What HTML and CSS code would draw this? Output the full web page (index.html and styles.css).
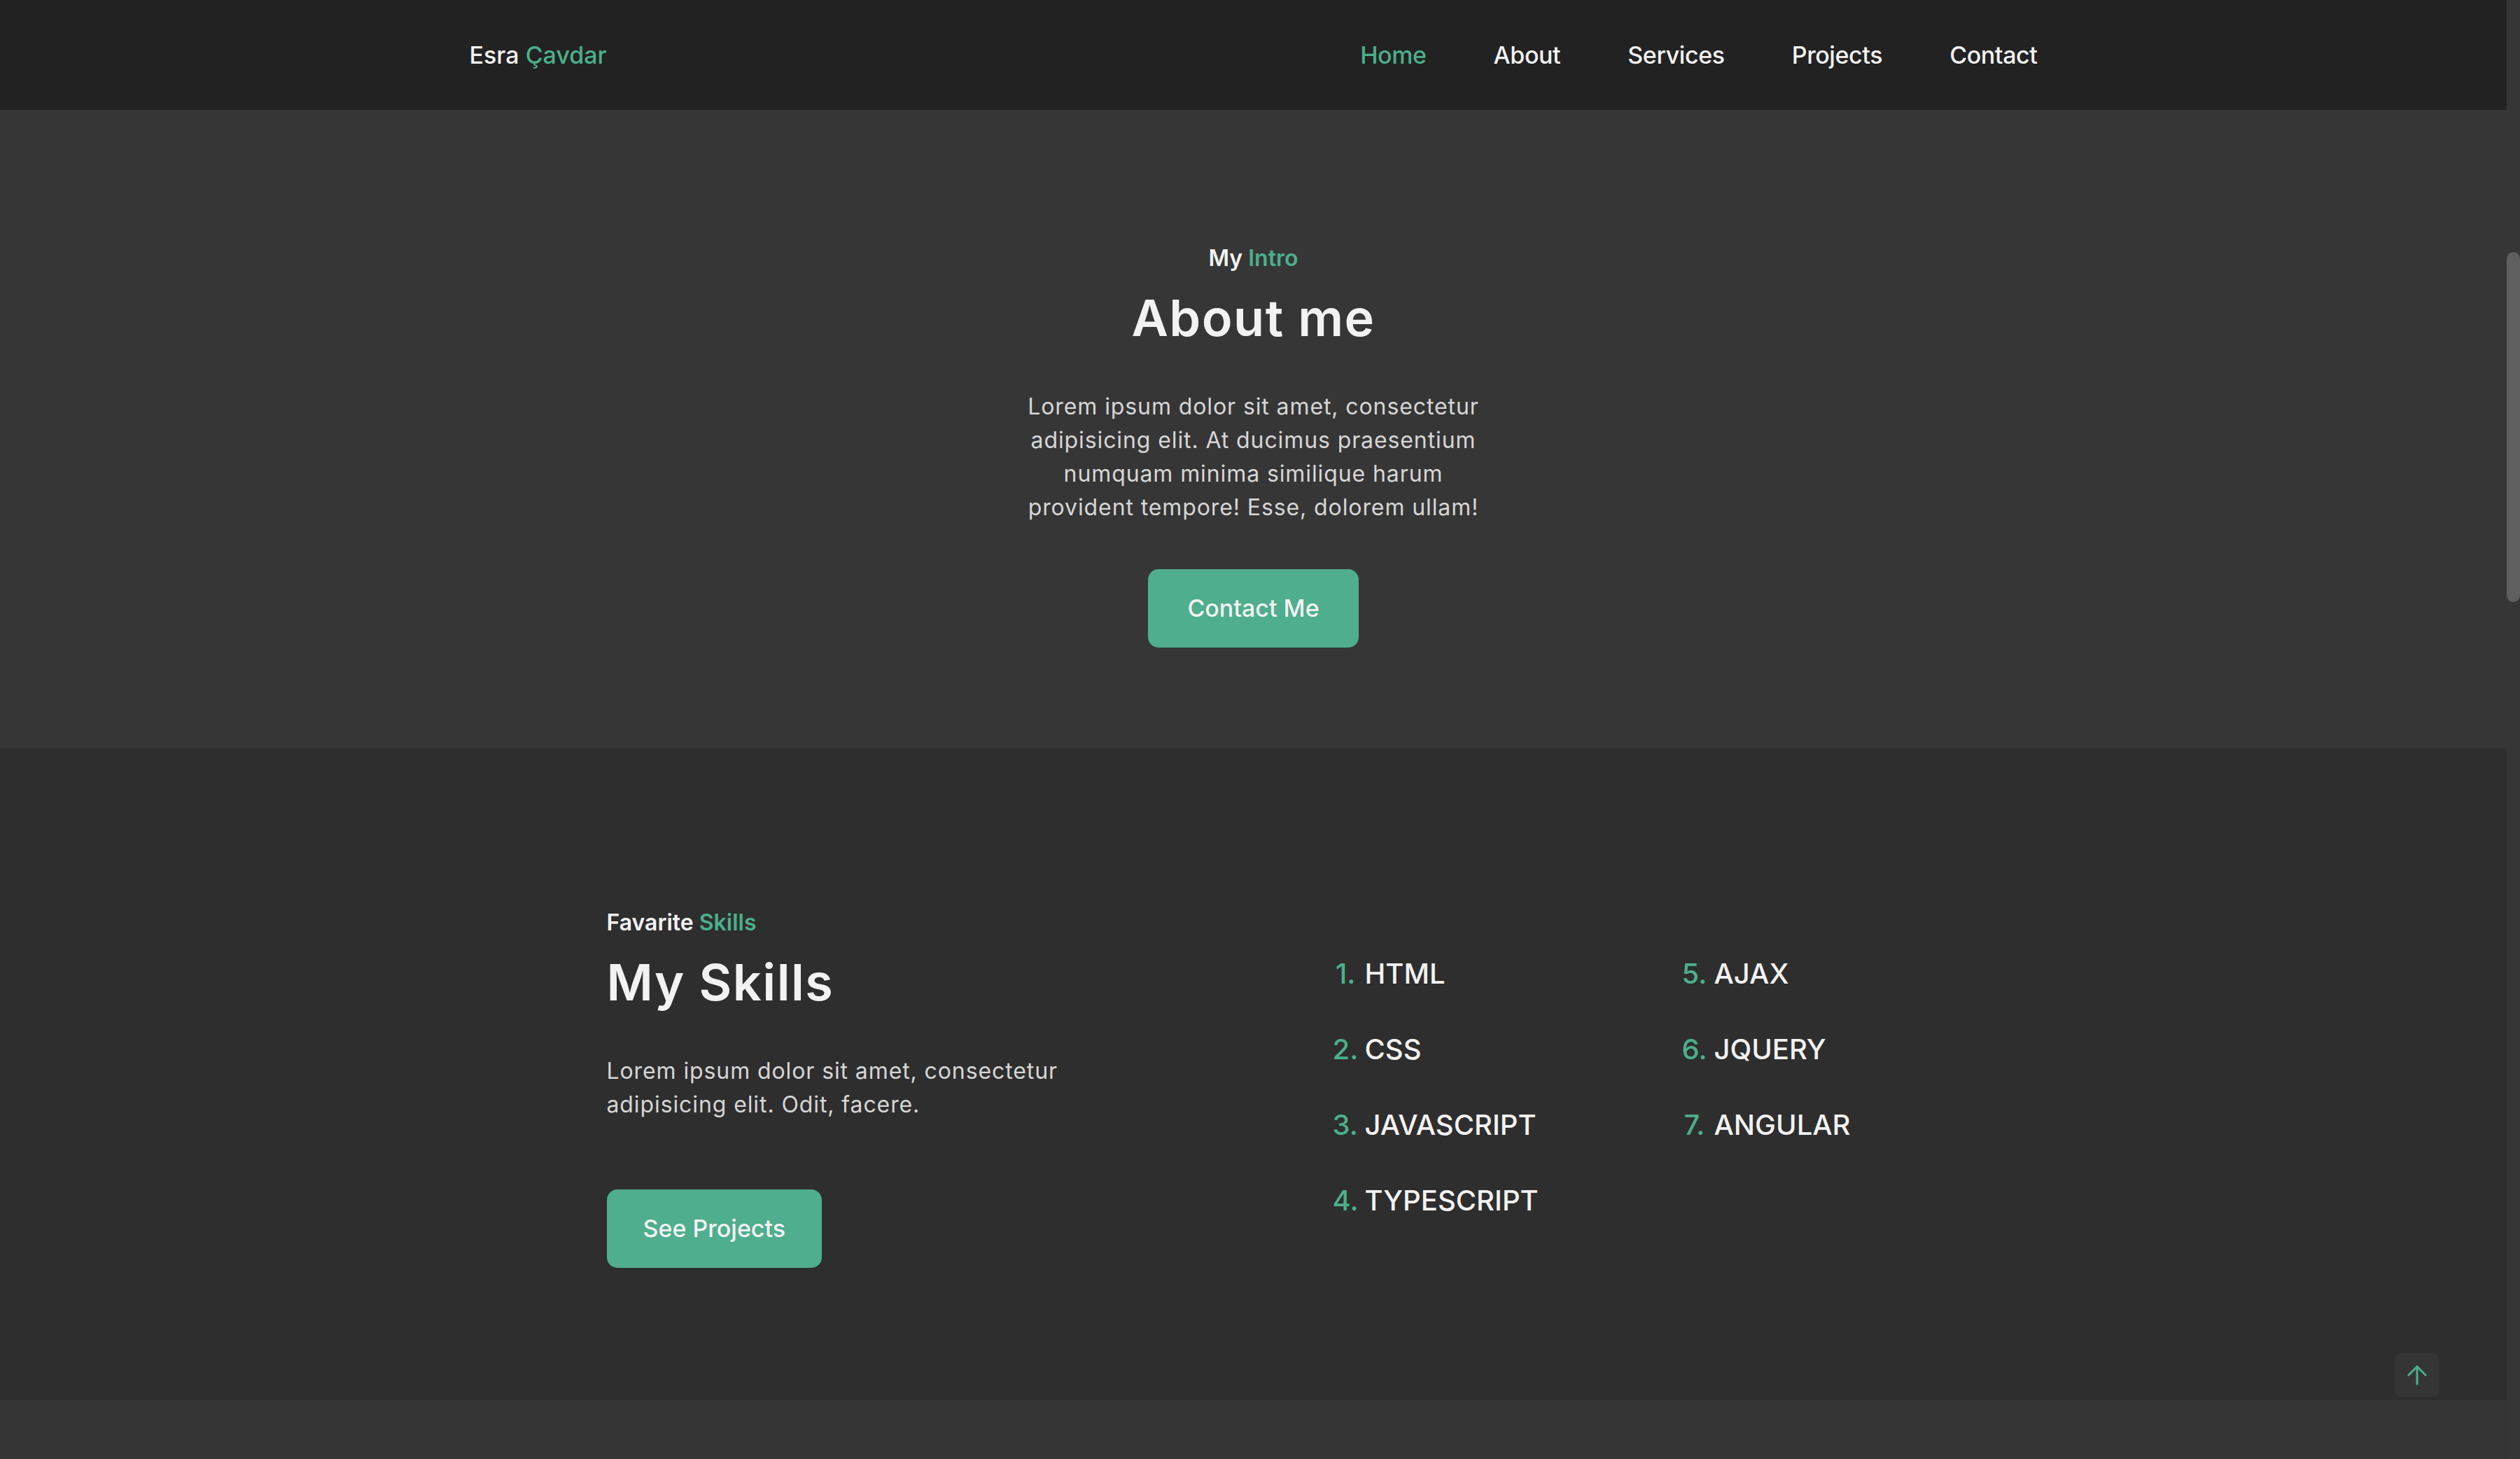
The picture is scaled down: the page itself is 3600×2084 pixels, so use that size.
FILE: index.html
```html
<!DOCTYPE html>
<html lang="en">
<head>
<meta charset="utf-8">
<title>Esra Çavdar</title>
<link rel="stylesheet" href="styles.css">
</head>
<body>
<div class="page">
  <header class="site-header">
    <div class="header-inner">
      <a class="logo" href="#">Esra <span class="accent">Çavdar</span></a>
      <nav>
        <ul class="nav">
          <li><a class="active" href="#">Home</a></li>
          <li><a href="#">About</a></li>
          <li><a href="#">Services</a></li>
          <li><a href="#">Projects</a></li>
          <li><a href="#">Contact</a></li>
        </ul>
      </nav>
    </div>
  </header>

  <section class="about">
    <p class="eyebrow">My <span class="accent">Intro</span></p>
    <h2 class="title">About me</h2>
    <p class="text">Lorem ipsum dolor sit amet, consectetur adipisicing elit. At ducimus praesentium numquam minima similique harum provident tempore! Esse, dolorem ullam!</p>
    <a class="btn" href="#">Contact Me</a>
  </section>

  <section class="skills">
    <div class="skills-inner">
      <div class="skills-intro">
        <p class="eyebrow">Favarite <span class="accent">Skills</span></p>
        <h2 class="title">My Skills</h2>
        <p class="text">Lorem ipsum dolor sit amet, consectetur adipisicing elit. Odit, facere.</p>
        <a class="btn btn-projects" href="#">See Projects</a>
      </div>
      <div class="skills-list-wrap">
        <ol class="skills-list">
          <li>HTML</li>
          <li>CSS</li>
          <li>JAVASCRIPT</li>
          <li>TYPESCRIPT</li>
          <li>AJAX</li>
          <li>JQUERY</li>
          <li>ANGULAR</li>
        </ol>
      </div>
    </div>
  </section>

  <section class="next"></section>
</div>

<a class="to-top" href="#" aria-label="Back to top">
  <svg width="28" height="28" viewBox="0 0 28 28" fill="none" stroke="#4caf8c" stroke-width="3" stroke-linecap="square">
    <line x1="14" y1="3" x2="14" y2="27"/>
    <polyline points="2,14 14,2 26,14"/>
  </svg>
</a>

<div class="scrollbar"><div class="scrollbar-thumb"></div></div>
</body>
</html>
```

FILE: styles.css
```css
* {
  box-sizing: border-box;
  margin: 0;
  padding: 0;
}

html,
body {
  background: #353535;
}

body {
  font-family: "Inter", "Open Sans", sans-serif;
  color: #f2f2f2;
}

.page {
  width: calc(100% - 19px);
}

.accent {
  color: #4caf8c;
}

/* Header */
.site-header {
  background: #222222;
  height: 157px;
}

.header-inner {
  width: 2240px;
  height: 100%;
  margin: 0 auto;
  display: flex;
  align-items: center;
  justify-content: space-between;
}

.logo {
  font-size: 34px;
  font-weight: 500;
  color: #f2f2f2;
  text-decoration: none;
}

.nav {
  display: flex;
  gap: 96px;
  list-style: none;
}

.nav a {
  font-size: 34px;
  font-weight: 500;
  color: #f2f2f2;
  text-decoration: none;
  letter-spacing: -0.4px;
}

.nav a.active {
  color: #4caf8c;
}

/* Shared text */
.eyebrow {
  font-size: 32px;
  font-weight: 600;
  line-height: 48px;
}

.title {
  font-size: 72px;
  font-weight: 600;
  line-height: 86px;
  margin-top: 18px;
  letter-spacing: 1.5px;
}

.text {
  font-size: 32px;
  line-height: 48px;
  color: #d6d6d6;
  margin-top: 60px;
  letter-spacing: 0.9px;
}

.btn {
  display: inline-block;
  margin-top: 64px;
  background: #4eae8d;
  color: #f4f4f4;
  font-size: 34px;
  font-weight: 500;
  line-height: 112px;
  padding: 0 56px;
  border-radius: 15px;
  text-decoration: none;
}

/* About */
.about {
  background: #363636;
  padding: 188px 0 144px;
  text-align: center;
}

.about .text {
  max-width: 665px;
  margin-left: auto;
  margin-right: auto;
}

/* Skills */
.skills {
  background: #2e2e2e;
  padding: 225px 0 189px;
}

.skills-inner {
  width: 1848px;
  margin: 0 auto;
  display: grid;
  grid-template-columns: 924px 924px;
  align-items: center;
}

.skills-intro .text {
  max-width: 690px;
}

.btn-projects {
  margin-top: 97px;
  padding: 0 52px;
}

.skills-list-wrap {
  padding-left: 113px;
}

.skills-list {
  list-style: none;
  counter-reset: skill;
  display: grid;
  grid-template-columns: 499px 300px;
  grid-template-rows: repeat(4, 60px);
  grid-auto-flow: column;
  row-gap: 48px;
}

.skills-list li {
  counter-increment: skill;
  font-size: 40px;
  font-weight: 500;
  line-height: 60px;
  color: #f2f2f2;
}

.skills-list li::before {
  content: counter(skill) ".";
  display: inline-block;
  width: 33px;
  margin-right: 13px;
  text-align: right;
  color: #4caf8c;
}

.next {
  background: #353535;
  height: 300px;
}

/* Back to top */
.to-top {
  position: fixed;
  right: 115px;
  bottom: 88px;
  width: 64px;
  height: 64px;
  border-radius: 12px;
  background: #353535;
  display: flex;
  align-items: center;
  justify-content: center;
}

/* Scrollbar overlay */
.scrollbar {
  position: fixed;
  top: 0;
  right: 0;
  width: 19px;
  height: 100%;
  background: #363636;
}

.scrollbar-thumb {
  position: absolute;
  top: 360px;
  left: 0;
  width: 19px;
  height: 500px;
  border-radius: 10px;
  background: #5f5f5f;
}
```
